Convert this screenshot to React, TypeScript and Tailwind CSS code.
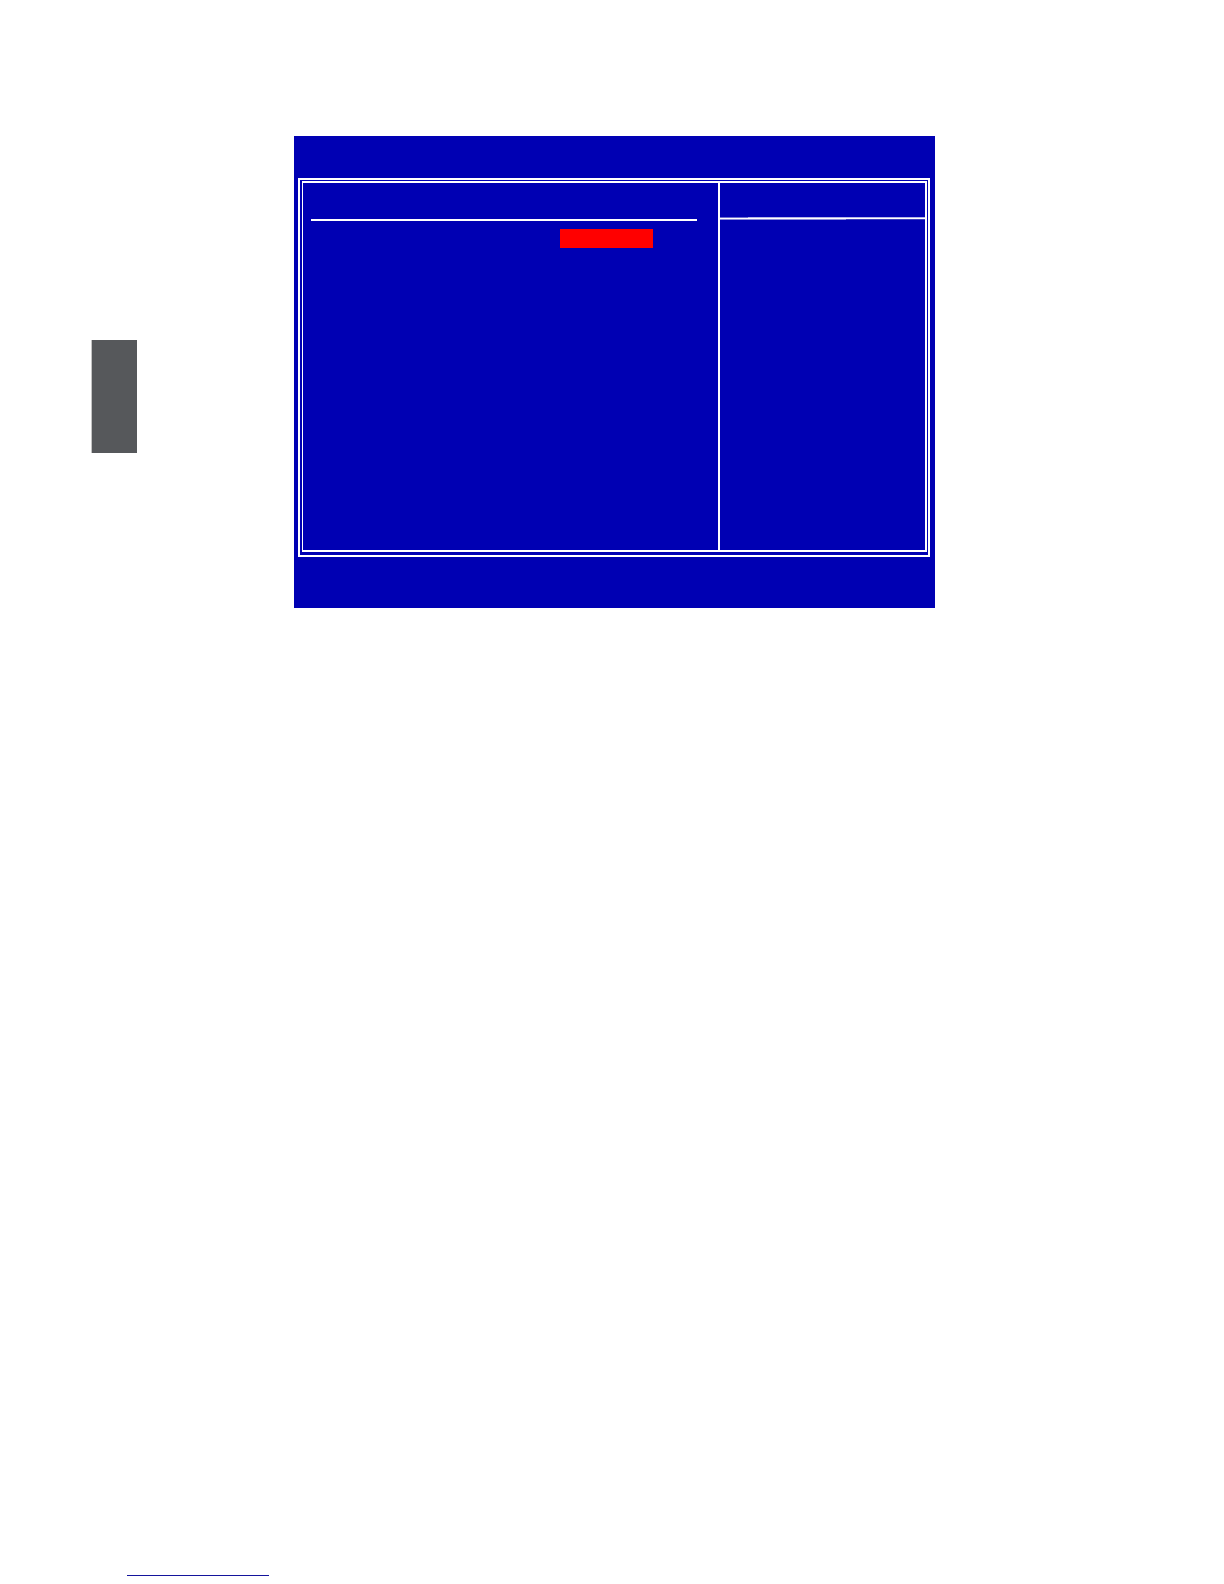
const SideTab = () => {
  return (
    <aside className="mt-[204px] h-[113px] w-[46px] shrink-0 border-l border-[#c4c4c4] bg-[#56585b]" />
  );
};

const SettingsPane = () => {
  return (
    <section className="border-r-2 border-white pl-2 pr-[21px] pt-9">
      <hr className="border-t-2 border-white" />
      {/* Selected value */}
      <div className="ml-[249px] mt-2 h-[19px] w-[93px] bg-[#ff0000]" />
    </section>
  );
};

const HelpPane = () => {
  return (
    <section className="pt-[34px]">
      <div className="flex h-px">
        <div className="w-7 bg-[#6c6cd0]" />
        <div className="flex-1 bg-[#b4b4ea]" />
      </div>
      <div className="h-px bg-white" />
      <div className="flex h-px">
        <div className="w-[126px] bg-[#8a8adc]" />
        <div className="flex-1 bg-[#3c3cc0]" />
      </div>
    </section>
  );
};

const SetupScreen = () => {
  return (
    <main className="flex-1 bg-[#0000b3] pb-[51px] pl-1 pr-[5px] pt-[42px]">
      {/* Double frame */}
      <div className="border-2 border-white pb-[3px] pl-0.5 pr-px pt-px">
        <div className="grid min-h-[371px] grid-cols-[417fr_205fr] border-2 border-l border-white">
          <SettingsPane />
          <HelpPane />
        </div>
      </div>
    </main>
  );
};

const App = () => {
  return (
    <div className="flex min-h-screen flex-col justify-between bg-white font-['Liberation_Sans',sans-serif]">
      <div className="flex items-start pl-[91px] pr-[289px] pt-[136px]">
        <SideTab />
        <div className="w-[157px] shrink-0" />
        <SetupScreen />
      </div>

      <footer className="pb-2 pl-[127px]">
        <hr className="h-px w-[142px] border-0 bg-[#14149c]" />
      </footer>
    </div>
  );
};

export default App;
